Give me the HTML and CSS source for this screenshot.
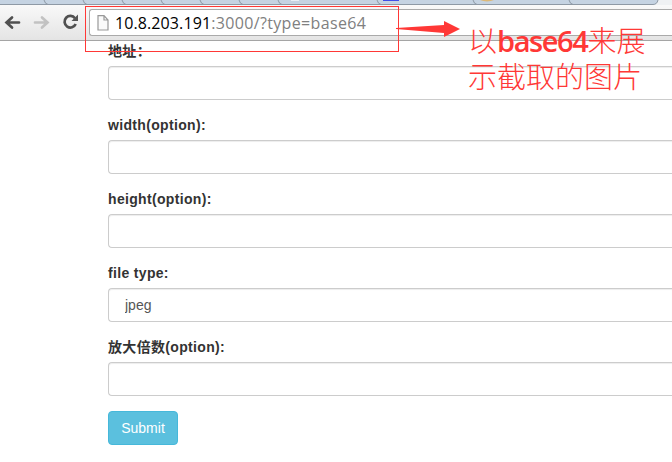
FILE: index.html
```html
<!DOCTYPE html>
<html lang="zh">
<head>
<meta charset="utf-8">
<title>base64</title>
<link rel="stylesheet" href="styles.css">
</head>
<body>
<header class="browser">
  <svg class="tabs" width="672" height="5" viewBox="0 0 672 5">
    <path class="tab-fill" d="M0 0H658Q657 4.5 653 4.5H0Z"/>
    <path class="tab-line" d="M0 4.5H653Q657 4.5 658 0M44 0q1 4 4 4.5M83 0q1 4 4 4.5M122 0q1 4 4 4.5M161 0q1 4 4 4.5M200 0q1 4 4 4.5M239 0q1 4 4 4.5M278 0q1 4 4 4.5M377 0q1 4 4 4.5M473 0q1 4 4 4.5M569 0q1 4 4 4.5"/>
    <path fill="#4050e8" d="M383 0h16v1h-16z"/>
    <path fill="#dcb878" d="M480 0h14q-3 1.4-7 1.4T480 0z"/>
    <path fill="#e8eef5" d="M291 0h8v1h-8z"/>
  </svg>
  <nav class="toolbar">
    <svg class="controls" width="82" height="24" viewBox="0 0 82 24">
      <path class="back" d="M19 12.5H7M12 7.5L6.5 12.5L12 17.5"/>
      <path class="forward" d="M35 12.5H47M42 7.5L47.5 12.5L42 17.5"/>
      <path class="reload" d="M75 8.2A5.8 5.8 0 1 0 75.7 14"/>
      <path fill="#555" d="M78 4.5V11H71.5Z"/>
    </svg>
    <div class="omnibox">
      <svg width="12" height="16" viewBox="0 0 12 16"><path d="M1 .7H7L11 5V15H1ZM7 .7V5H11" fill="#fafafa" stroke="#999" stroke-width="1.2"/></svg>
      <span class="url"><b>10.8.203.191</b>:3000/?type=base64</span>
    </div>
  </nav>
</header>
<form class="form">
  <div class="group"><label for="address">地址：</label><input id="address"></div>
  <div class="group"><label for="width">width(option):</label><input id="width"></div>
  <div class="group"><label for="height">height(option):</label><input id="height"></div>
  <div class="group"><label for="type">file type:</label><input id="type" class="type" value="jpeg"></div>
  <div class="group"><label for="scale">放大倍数(option):</label><input id="scale"></div>
  <button type="button">Submit</button>
</form>
<div class="highlight"></div>
<svg class="arrow" width="65" height="16" viewBox="0 0 65 16"><path fill="#ff3836" d="M0 7L48 4V0L64 8L48 16V12L0 8Z"/></svg>
<div class="note"><div class="note-line">以<b>base64</b>来展</div><div class="note-line">示截取的图片</div></div>
</body>
</html>
```
FILE: styles.css
```css
* { box-sizing: border-box; }
body {
  margin: 0;
  width: 672px;
  height: 462px;
  overflow: hidden;
  position: relative;
  background: #fff;
  color: #333;
  font: 14px/20px "Liberation Sans", "Noto Sans CJK SC", sans-serif;
}
.browser {
  height: 41px;
  border-bottom: 1px solid #a5a5a5;
  background: linear-gradient(#f9f9f9 5px, #e4e4e4);
}
.tabs { display: block; background: #eff1f3; }
.tab-fill { fill: #c5d3e2; }
.tab-line { fill: none; stroke: #8e99a5; }
.toolbar {
  display: flex;
  align-items: flex-start;
  padding-top: 4px;
}
.controls { margin: 1px 7px 0 0; flex: none; }
.back, .forward, .reload { fill: none; stroke: #505050; stroke-width: 2.7; }
.back, .forward { stroke-linecap: round; }
.forward { stroke: #c2c2c2; }
.omnibox {
  display: flex;
  align-items: center;
  flex: 1;
  height: 27px;
  padding-left: 7px;
  border: 1px solid #aaa;
  border-right: 0;
  border-radius: 3px 0 0 3px;
  background: #fff;
}
.omnibox svg { flex: none; }
.url {
  margin-left: 6px;
  color: #808080;
  font: 16px/24px "Open Sans", sans-serif;
  letter-spacing: .35px;
  white-space: nowrap;
}
.url b { color: #000; font-weight: 400; letter-spacing: .1px; }
.form { padding-left: 108px; }
.group { height: 74px; }
label {
  display: block;
  margin-bottom: 5px;
  font-weight: 700;
  letter-spacing: .33px;
  white-space: nowrap;
}
input {
  display: block;
  width: 100%;
  height: 34px;
  padding: 6px 12px;
  border: 1px solid #ccc;
  border-right: 0;
  border-radius: 4px 0 0 4px;
  background: #fff;
  box-shadow: inset 0 1px 1px rgba(0, 0, 0, .075);
  color: #555;
  font: inherit;
}
.type { padding-left: 16px; }
button {
  display: block;
  width: 70px;
  height: 34px;
  padding: 0;
  border: 1px solid #46b8da;
  border-radius: 4px;
  background: #5bc0de;
  color: #fff;
  font: inherit;
}
.highlight {
  position: absolute;
  left: 85px;
  top: 6px;
  width: 314px;
  height: 46px;
  border: 1px solid #ff3836;
}
.arrow { position: absolute; left: 396px; top: 21px; }
.note {
  position: absolute;
  left: 468px;
  top: 23px;
  color: #ff3836;
  font: 300 29px/36px "Open Sans", "Noto Sans CJK SC", sans-serif;
  white-space: nowrap;
}
.note b { font-weight: 600; letter-spacing: -1.4px; }
```
